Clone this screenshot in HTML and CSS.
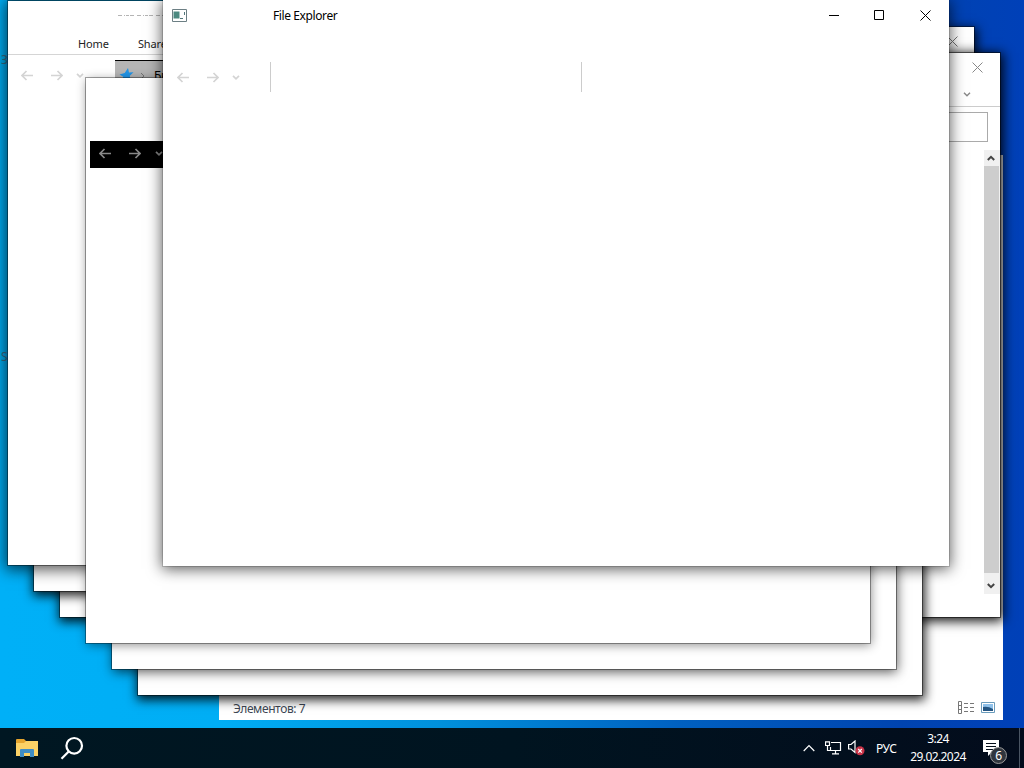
FILE: index.html
```html
<!DOCTYPE html>
<html lang="ru">
<head>
  <meta charset="UTF-8" />
  <title>File Explorer</title>
  <link rel="stylesheet" href="styles.css">
</head>
<body>

<!-- Общие иконки -->
<svg class="sprite">
  <symbol id="close" viewBox="0 0 11 11"><path d="M.5 .5L10.5 10.5M10.5 .5L.5 10.5" /></symbol>
  <symbol id="back" viewBox="0 0 12 11"><path d="M12 5.5H1M5.5 1L1 5.5L5.5 10" /></symbol>
  <symbol id="forward" viewBox="0 0 12 11"><path d="M0 5.5H11M6.5 1L11 5.5L6.5 10" /></symbol>
  <symbol id="down" viewBox="0 0 8 5"><path d="M1 .8L4 3.8L7 .8" /></symbol>
</svg>

<div class="desktop">
  <span class="desk-label label-top">З</span>
  <span class="desk-label label-mid">S</span>

  <!-- Окно со строкой состояния -->
  <div class="window w-status">
    <div class="statusbar">
      <span class="count">Элементов: 7</span>
      <svg width="16" height="13" viewBox="0 0 16 13" fill="none" stroke="#777">
        <path d="M.5 .5h3v12h-3zM.5 4.5h3M.5 8.5h3" />
        <path d="M6 2.5h4M12 2.5h4M6 6.5h4M12 6.5h4M6 10.5h4M12 10.5h4" />
      </svg>
      <svg width="14" height="11" viewBox="0 0 14 11">
        <path d="M.5 .5h13v10h-13z" fill="#fff" stroke="#6a9cbc" />
        <path d="M2 2h10v7H2z" fill="#8fc1ea" />
        <path d="M2 5q5-1 10 2v2H2z" fill="#245582" />
      </svg>
    </div>
  </div>

  <div class="window w-back">
    <svg class="icon x" width="11" height="11"><use href="#close" /></svg>
  </div>

  <!-- Окно с полосой прокрутки -->
  <div class="window w-scroll">
    <div class="caption"><svg class="icon x" width="11" height="11"><use href="#close" /></svg></div>
    <div class="ribbon-row"><svg class="icon" width="8" height="5"><use href="#down" /></svg></div>
    <div class="search-row"><div class="search"></div></div>
    <div class="scrollbar">
      <div class="arrow"><svg width="8" height="6" viewBox="0 0 8 6"><path d="M.8 5L4 1.8L7.2 5" /></svg></div>
      <div class="thumb"></div>
      <div class="arrow arrow-down"><svg width="8" height="6" viewBox="0 0 8 6"><path d="M.8 1L4 4.2L7.2 1" /></svg></div>
    </div>
  </div>

  <div class="window w-step3"></div>
  <div class="window w-step2"></div>
  <div class="window w-left3"></div>
  <div class="window w-left2"></div>

  <!-- Левое окно с лентой -->
  <div class="window w-left">
    <svg class="title-trace" width="60" height="3" viewBox="0 0 60 3" fill="none" stroke="#b4b4b4">
      <path d="M0 1.5h60" stroke-dasharray="4 2 1 1 3 1 4 3" />
    </svg>
    <div class="tabs"><span>Home</span><span>Share</span></div>
    <div class="nav">
      <svg class="icon" width="12" height="11"><use href="#back" /></svg>
      <svg class="icon" width="12" height="11"><use href="#forward" /></svg>
      <svg class="icon" width="8" height="5"><use href="#down" /></svg>
      <div class="address">
        <svg width="15" height="15" viewBox="0 0 15 15"><path d="M9 0L10 4.4L14.5 4.2L10.8 7.7L11.5 13L7.6 10.2L2 13.5L4.3 8.8L.5 6.5L5.7 5z" fill="#2195e8" /></svg>
        <svg width="5" height="8" viewBox="0 0 5 8" fill="none" stroke="#777"><path d="M1 1l3 3l-3 3" /></svg>
        <span>Быстрый</span>
      </div>
    </div>
  </div>

  <div class="window w-step1">
    <div class="nav nav-dark">
      <svg class="icon" width="12" height="11"><use href="#back" /></svg>
      <svg class="icon" width="12" height="11"><use href="#forward" /></svg>
      <svg class="icon" width="8" height="5"><use href="#down" /></svg>
    </div>
  </div>

  <!-- Активное окно -->
  <div class="window w-front">
    <div class="titlebar">
      <svg width="15" height="13" viewBox="0 0 15 13">
        <path d="M.5 .5h14v12h-14z" fill="#fff" stroke="#6c7f84" />
        <path d="M1.5 2.5h6v7h-6z" fill="#4c8980" />
        <path d="M8 9h3v1H8zM12 3h1v3h-1z" fill="#52777b" />
      </svg>
      <span class="title">File Explorer</span>
      <div class="buttons">
        <svg class="icon" width="11" height="11" viewBox="0 0 11 11"><path d="M1 5.5H11" /></svg>
        <svg class="icon" width="11" height="11" viewBox="0 0 11 11"><path d="M.5 .5h9v9h-9z" /></svg>
        <svg class="icon x" width="11" height="11"><use href="#close" /></svg>
      </div>
    </div>
    <div class="nav">
      <svg class="icon" width="12" height="11"><use href="#back" /></svg>
      <svg class="icon" width="12" height="11"><use href="#forward" /></svg>
      <svg class="icon" width="8" height="5"><use href="#down" /></svg>
      <div class="address-empty"></div>
    </div>
  </div>
</div>

<!-- Панель задач -->
<div class="taskbar">
  <svg class="folder" width="22" height="18" viewBox="0 0 22 18">
    <path d="M0 1q0-1 1-1h7l2 2h11v4H0z" fill="#e5a52e" />
    <path d="M0 4h8l2-2h12v15H0z" fill="#fbd266" />
    <path d="M4 18v-7q0-1 1-1h12q1 0 1 1v7h-4v-4H8v4z" fill="#3f8dc4" />
  </svg>
  <svg class="loupe" width="24" height="24" viewBox="0 0 24 24" fill="none" stroke="#fff" stroke-width="2.2">
    <circle cx="14.2" cy="9.8" r="7.8" />
    <path d="M8.7 15.5L1.5 22.8" />
  </svg>
  <div class="tray">
    <svg class="chevron" width="12" height="8" viewBox="0 0 12 8"><path d="M.7 7L6 1.6L11.3 7" /></svg>
    <svg class="network" width="17" height="14" viewBox="0 0 17 14">
      <path d="M6 1.5h9.5v8H5.5V6M10.5 9.5v3M7 12.8h7" />
      <path d="M.5 .8h4v3.7h-4zM2.5 4.5v5h3" />
    </svg>
    <svg class="volume" width="17" height="16" viewBox="0 0 17 16">
      <path d="M.6 4.5h2.4l4-3.5v11.5l-4-3.5H.6z" />
      <circle cx="12" cy="10.8" r="4.5" fill="#c93348" stroke="none" />
      <path d="M10.2 9l3.6 3.6M13.8 9l-3.6 3.6" />
    </svg>
    <span class="lang">РУС</span>
    <div class="clock"><span>3:24</span><span>29.02.2024</span></div>
    <div class="notify">
      <svg width="16" height="16" viewBox="0 0 16 16">
        <path d="M0 0h16v12h-7l-4 4v-4H0z" fill="#fff" stroke="none" />
        <path d="M3 3.5h10M3 6.5h10M3 9.5h7" stroke="#06101c" />
      </svg>
      <span class="badge">6</span>
    </div>
  </div>
</div>

</body>
</html>
```
FILE: styles.css
```css
* {
  box-sizing: border-box;
}

body {
  margin: 0;
  width: 1024px;
  height: 768px;
  overflow: hidden;
  font-family: "Noto Sans", "Open Sans", sans-serif;
  font-size: 12px;
  letter-spacing: -0.4px;
  color: #222;
  display: flex;
  flex-direction: column;
}

svg {
  display: block;
  flex: none;
}

.sprite {
  position: absolute;
  width: 0;
  height: 0;
}

.icon {
  fill: none;
  stroke: currentColor;
}

/* Рабочий стол */
.desktop {
  position: relative;
  height: 728px;
  overflow: hidden;
  background: linear-gradient(90deg, #00b0f7 0, #00aef5 220px, #0090dc 440px, #0060c0 680px, #0044b0 900px, #0040b8 100%);
}

.desk-label {
  position: absolute;
  left: 1px;
  color: #3d6e88;
}

.label-top {
  top: 51px;
}

.label-mid {
  top: 348px;
}

/* Окна */
.window {
  position: absolute;
  width: 785px;
  height: 565px;
  background: #fff;
  box-shadow: 0 0 0 1px rgba(0,0,0,0.45), 1px 3px 10px 2px rgba(0,0,0,0.85);
}

.w-status {
  left: 219px;
  top: 155px;
  width: 784px;
  display: flex;
  align-items: flex-end;
  box-shadow: none;
}

.statusbar {
  display: flex;
  align-items: center;
  width: 100%;
  height: 25px;
  padding: 0 8px 0 14px;
  gap: 7px;
  color: #3c4653;
}

.count {
  margin-right: auto;
  padding-top: 2px;
}

.w-back {
  left: 190px;
  top: 27px;
  width: 784px;
  padding: 9px 16px;
  color: #777;
}

.w-back .icon {
  margin-left: auto;
}

.w-scroll {
  left: 216px;
  top: 53px;
  width: 784px;
  display: flex;
  flex-direction: column;
  align-items: flex-end;
  color: #888;
  height: 564px;
  box-shadow: 0 0 0 1px rgba(0,0,0,0.5), 1px 2px 11px 2px rgba(0,0,0,0.95);
}

.caption {
  padding: 9px 17px 0 0;
  height: 34px;
}

.ribbon-row {
  width: 100%;
  height: 20px;
  padding: 5px 29px 0 0;
  border-bottom: 1px solid #ccc;
}

.ribbon-row .icon {
  margin-left: auto;
  stroke-width: 1.4;
}

.search-row {
  padding: 5px 12px 8px 0;
}

.search {
  width: 200px;
  height: 30px;
  border: 1px solid #aaa;
}

.scrollbar {
  width: 16px;
  height: 444px;
  background: #f0f0f0;
  display: flex;
  flex-direction: column;
}

.arrow {
  height: 16px;
  padding-right: 2px;
  display: flex;
  align-items: center;
  justify-content: center;
}

.arrow-down {
  height: 21px;
  padding-top: 5px;
}

.arrow svg {
  fill: none;
  stroke: #444;
  stroke-width: 2;
}

.thumb {
  flex: 1;
  margin-right: 1px;
  background: #cdcdcd;
}

.w-step3 {
  left: 138px;
  top: 130px;
  width: 784px;
}

.w-step2 {
  left: 112px;
  top: 104px;
  width: 784px;
}

.w-step1 {
  left: 86px;
  top: 78px;
  width: 784px;
  padding: 63px 4px;
}

.w-left3 {
  left: 60px;
  top: 52px;
  width: 784px;
}

.w-left2 {
  left: 34px;
  top: 26px;
  width: 784px;
}

.w-step2 {
  box-shadow: 0 0 0 1px rgba(0,0,0,0.4), 1px 3px 11px rgba(0,0,0,0.65);
}

.w-step1 {
  box-shadow: 0 0 0 1px rgba(0,0,0,0.35), 1px 2px 10px rgba(0,0,0,0.45);
}

.w-left {
  left: 8px;
  top: 1px;
  height: 564px;
  box-shadow: 0 0 0 1px rgba(0,0,0,0.4), 0 2px 14px 3px rgba(0,0,0,0.65);
}

/* От заголовка видна только узкая полоска */
.title-trace {
  margin: 13px 0 0 110px;
}

.tabs {
  display: flex;
  gap: 29px;
  height: 38px;
  padding: 18px 0 0 70px;
  border-bottom: 1px solid #d5d5d5;
  font-size: 11px;
  letter-spacing: -0.1px;
  line-height: 17px;
}

/* Панель навигации */
.nav {
  display: flex;
  align-items: center;
  gap: 17px;
  color: #d4d4d4;
}

.nav .icon {
  stroke-width: 1.7;
}

.w-left .nav {
  height: 30px;
  margin-top: 5px;
  padding-left: 13px;
}

.w-left .nav .icon:nth-child(2) {
  margin-left: 1px;
}

.w-left .nav .icon:nth-child(3) {
  margin-left: -4px;
}

.address {
  display: flex;
  align-items: center;
  gap: 6px;
  width: 300px;
  height: 30px;
  margin-left: 14px;
  padding-left: 4px;
  border-top: 1px solid #000;
  background: #b5b5b5;
  color: #000;
}

.address span {
  margin-left: 3px;
}

.nav-dark {
  height: 27px;
  padding: 0 0 3px 9px;
  gap: 18px;
  background: #000;
  color: #888;
}

.nav-dark .icon:nth-child(3) {
  margin-left: -4px;
}

.w-front {
  left: 163px;
  top: 0;
  width: 786px;
  height: 566px;
  box-shadow: 0 0 0 1px rgba(0,0,0,0.15), 0 2px 14px 1px rgba(0,0,0,0.65);
}

.titlebar {
  display: flex;
  align-items: center;
  height: 30px;
  padding: 0 18px 0 9px;
  color: #000;
}

.title {
  margin-left: 86px;
  padding-top: 1px;
}

.buttons {
  display: flex;
  gap: 35px;
  margin-left: auto;
}

.w-front .nav {
  height: 30px;
  margin-top: 32px;
  padding-left: 14px;
}

.w-front .nav .icon:nth-child(2) {
  margin-left: 1px;
}

.w-front .nav .icon:nth-child(3) {
  margin-left: -4px;
}

.address-empty {
  width: 312px;
  height: 30px;
  margin-left: 13px;
  border: solid #ccc;
  border-width: 0 1px;
}

/* Панель задач */
.taskbar {
  display: flex;
  align-items: center;
  height: 40px;
  padding-left: 16px;
  background: linear-gradient(90deg, #001722, #001420 50%, #030c1c);
  color: #fff;
}

.loupe {
  margin-left: 22px;
}

.tray {
  display: flex;
  align-items: center;
  height: 40px;
  margin-left: auto;
  padding-right: 3px;
  border-right: 1px solid #4a5563;
  margin-right: 4px;
}

.tray svg {
  fill: none;
  stroke: #fff;
  stroke-width: 1.2;
}

.network {
  margin-left: 10px;
}

.volume {
  margin-left: 6px;
}

.lang {
  width: 23px;
  margin-left: 11px;
}

.clock {
  display: flex;
  flex-direction: column;
  align-items: center;
  width: 56px;
  margin-left: 11px;
  line-height: 18px;
  letter-spacing: -0.6px;
}

.notify {
  position: relative;
  margin: 0 17px 0 17px;
}

.badge {
  position: absolute;
  left: 7px;
  top: 7px;
  width: 17px;
  height: 17px;
  border: 1px solid #999;
  border-radius: 50%;
  background: #30363e;
  line-height: 15px;
  text-align: center;
}
```
